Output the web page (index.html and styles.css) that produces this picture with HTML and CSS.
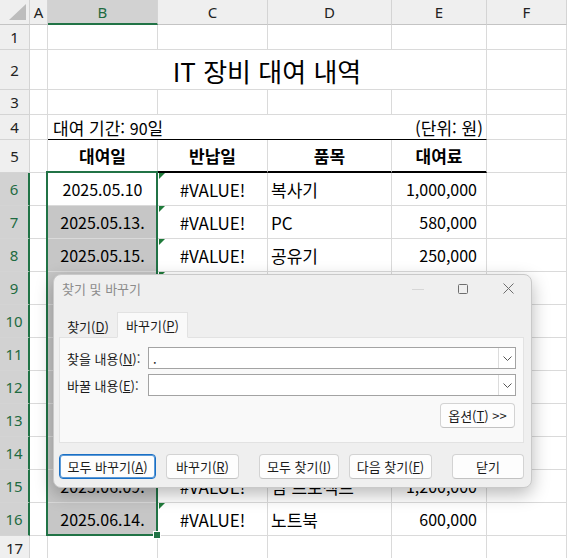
FILE: index.html
```html
<!DOCTYPE html>
<html lang="ko">
<head>
    <meta charset="UTF-8">
    <title>IT 장비 대여 내역</title>
    <link rel="stylesheet" href="styles.css">
</head>
<body>
    <div class="sheet">
        <div class="corner"><svg width="17" height="16" viewBox="0 0 17 16"><polygon points="17,0 17,16 0,16" fill="#bdbdbd"/></svg></div>
        <div class="ch">A</div><div class="ch on">B</div><div class="ch">C</div><div class="ch">D</div><div class="ch">E</div><div class="ch">F</div>

        <div class="rh">1</div><div class="c"></div><div class="c"></div><div class="c"></div><div class="c"></div><div class="c"></div><div class="c"></div>

        <div class="rh">2</div><div class="c"></div><div class="c title">IT 장비 대여 내역</div><div class="c"></div>

        <div class="rh">3</div><div class="c"></div><div class="c"></div><div class="c"></div><div class="c"></div><div class="c"></div><div class="c"></div>

        <div class="rh">4</div><div class="c"></div><div class="c info"><span>대여 기간: <b class="dg">90</b>일</span><span>(단위: 원)</span></div><div class="c"></div>

        <div class="rh">5</div><div class="c"></div><div class="c th">대여일</div><div class="c th">반납일</div><div class="c th">품목</div><div class="c th">대여료</div><div class="c"></div>

        <div class="rh on">6</div><div class="c"></div>
        <div class="c mid dg active">2025.05.10<div class="selbox"><i class="handle"></i></div></div>
        <div class="c mid err">#VALUE!</div><div class="c item">복사기</div><div class="c num dg">1,000,000</div><div class="c"></div>

        <div class="rh on">7</div><div class="c"></div><div class="c mid dg hl">2025.05.13.</div><div class="c mid err">#VALUE!</div><div class="c item">PC</div><div class="c num dg">580,000</div><div class="c"></div>

        <div class="rh on">8</div><div class="c"></div><div class="c mid dg hl">2025.05.15.</div><div class="c mid err">#VALUE!</div><div class="c item">공유기</div><div class="c num dg">250,000</div><div class="c"></div>

        <!-- rows 9-14 sit under the dialog -->
        <div class="rh on">9</div><div class="c"></div><div class="c hl"></div><div class="c err"></div><div class="c"></div><div class="c"></div><div class="c"></div>
        <div class="rh on">10</div><div class="c"></div><div class="c hl"></div><div class="c err"></div><div class="c"></div><div class="c"></div><div class="c"></div>
        <div class="rh on">11</div><div class="c"></div><div class="c hl"></div><div class="c err"></div><div class="c"></div><div class="c"></div><div class="c"></div>
        <div class="rh on">12</div><div class="c"></div><div class="c hl"></div><div class="c err"></div><div class="c"></div><div class="c"></div><div class="c"></div>
        <div class="rh on">13</div><div class="c"></div><div class="c hl"></div><div class="c err"></div><div class="c"></div><div class="c"></div><div class="c"></div>
        <div class="rh on">14</div><div class="c"></div><div class="c hl"></div><div class="c err"></div><div class="c"></div><div class="c"></div><div class="c"></div>

        <div class="rh on">15</div><div class="c"></div><div class="c mid dg hl">2025.06.09.</div><div class="c mid err">#VALUE!</div><div class="c item">빔 프로젝트</div><div class="c num dg">1,200,000</div><div class="c"></div>

        <div class="rh on">16</div><div class="c"></div><div class="c mid dg hl">2025.06.14.</div><div class="c mid err">#VALUE!</div><div class="c item">노트북</div><div class="c num dg">600,000</div><div class="c"></div>

        <div class="rh">17</div><div class="c"></div><div class="c"></div><div class="c"></div><div class="c"></div><div class="c"></div><div class="c"></div>
    </div>

    <div class="dialog">
        <div class="dlg-bar">
            <span class="dlg-title">찾기 및 바꾸기</span>
            <div class="win-ctl">
                <svg width="12" height="10" viewBox="0 0 12 10"><line x1="0" y1="5.5" x2="12" y2="5.5" stroke="#d6d6d6"/></svg>
                <svg class="max" width="10" height="10" viewBox="0 0 10 10"><rect x="0.5" y="0.5" width="9" height="9" rx="1" fill="none" stroke="#6e6e6e"/></svg>
                <svg class="close" width="11" height="11" viewBox="0 0 11 11"><path d="M0.5 0.5L10.5 10.5M10.5 0.5L0.5 10.5" stroke="#6e6e6e"/></svg>
            </div>
        </div>

        <div class="tabs">
            <div class="tab">찾기(<u>D</u>)</div>
            <div class="tab on">바꾸기(<u>P</u>)</div>
        </div>

        <div class="panel">
            <div class="field">
                <label>찾을 내용(<u>N</u>):</label>
                <div class="combo"><span class="val">.</span><span class="drop"><svg width="9" height="5" viewBox="0 0 9 5"><path d="M0.5 0.5L4.5 4.5L8.5 0.5" fill="none" stroke="#555"/></svg></span></div>
            </div>
            <div class="field">
                <label>바꿀 내용(<u>E</u>):</label>
                <div class="combo"><span class="val"></span><span class="drop"><svg width="9" height="5" viewBox="0 0 9 5"><path d="M0.5 0.5L4.5 4.5L8.5 0.5" fill="none" stroke="#555"/></svg></span></div>
            </div>
            <div class="opt-row">
                <button class="btn opt">옵션(<u>T</u>) &gt;&gt;</button>
            </div>
        </div>

        <div class="actions">
            <button class="btn b-allrep focus">모두 바꾸기(<u>A</u>)</button>
            <button class="btn b-rep">바꾸기(<u>R</u>)</button>
            <button class="btn b-allfind">모두 찾기(<u>I</u>)</button>
            <button class="btn b-next">다음 찾기(<u>F</u>)</button>
            <button class="btn b-close">닫기</button>
        </div>
    </div>
</body>
</html>
```

FILE: styles.css
```css
body {
    margin: 0;
    width: 567px;
    height: 558px;
    overflow: hidden;
    position: relative;
    background: #fff;
    font-family: "Noto Sans CJK KR", "Noto Sans", sans-serif;
    color: #000;
}

/* ---- sheet ---- */
.sheet {
    display: grid;
    grid-template-columns: 30px 18px 110px 110px 124px 95px 80px;
    grid-template-rows: 25px 25px 40px 25px 25px 33px repeat(11, 33px) 25px;
}
.sheet > div {
    box-sizing: border-box;
    display: flex;
    align-items: center;
    white-space: nowrap;
}
.corner {
    background: #efefef;
    border-right: 1px solid #d4d4d4;
    border-bottom: 1px solid #c4c4c4;
    justify-content: flex-end;
    align-items: flex-end !important;
    padding: 0 3px 4px 0;
}
.ch {
    background: #efefef;
    border-right: 1px solid #d4d4d4;
    border-bottom: 1px solid #c4c4c4;
    justify-content: center;
    font-family: "Noto Sans", sans-serif;
    font-size: 15px;
    color: #222;
}
.ch.on {
    background: #d2d2d2;
    color: #1e6b41;
    border-bottom: 2px solid #217346;
}
.rh {
    background: #efefef;
    border-right: 1px solid #d4d4d4;
    border-bottom: 1px solid #d4d4d4;
    justify-content: center;
    font-family: "Noto Sans", sans-serif;
    font-size: 15px;
    color: #222;
}
.rh.on {
    background: #d2d2d2;
    color: #1e6b41;
    border-right: 2px solid #217346;
}
.c {
    border-right: 1px solid #dadada;
    border-bottom: 1px solid #dadada;
    font-size: 17px;
    position: relative;
}
.dg {
    font-size: 16px;
    font-weight: normal;
}
.title {
    grid-column: span 4;
    justify-content: center;
    font-size: 26px;
    padding-top: 2px;
}
.info {
    grid-column: span 4;
    justify-content: space-between;
    padding: 0 3px 0 5px;
    border-bottom: 1px solid #000 !important;
}
.th {
    justify-content: center;
    font-weight: bold;
    border-bottom: 2px solid #000 !important;
}
.mid {
    justify-content: center;
}
.item {
    padding-left: 3px;
}
.num {
    justify-content: flex-end;
    padding-right: 9px;
}
.hl {
    background: #c6c6c6;
}
.err::before {
    content: "";
    position: absolute;
    left: 1px;
    top: 0;
    border-top: 6px solid #1f7a3a;
    border-right: 6px solid transparent;
}
.selbox {
    position: absolute;
    left: -2px;
    top: -2px;
    width: 112px;
    height: 365px;
    box-sizing: border-box;
    border: 2px solid #217346;
    z-index: 2;
}
.handle {
    position: absolute;
    right: -5px;
    bottom: -5px;
    width: 6px;
    height: 6px;
    background: #217346;
    border: 1px solid #fff;
}

/* ---- find & replace dialog ---- */
.dialog {
    position: absolute;
    left: 53px;
    top: 274px;
    width: 479px;
    height: 214px;
    box-sizing: border-box;
    background: #efefef;
    border: 1px solid #c9c9c9;
    border-radius: 8px;
    box-shadow: 0 6px 18px rgba(0,0,0,0.28);
    font-size: 13px;
    color: #1b1b1b;
    z-index: 5;
}
.dlg-bar {
    height: 27px;
    display: flex;
    align-items: center;
    padding-left: 8px;
}
.dlg-title {
    color: #8c8c8c;
}
.win-ctl {
    margin-left: auto;
    margin-right: 17px;
    display: flex;
    align-items: center;
}
.win-ctl .max {
    margin-left: 34px;
}
.win-ctl .close {
    margin-left: 35px;
}
.tabs {
    display: flex;
    margin: 10px 0 0 5px;
    height: 25px;
}
.tab {
    width: 58px;
    display: flex;
    align-items: center;
    justify-content: center;
    padding-top: 3px;
    box-sizing: border-box;
}
.tab.on {
    width: 71px;
    height: 26px;
    padding-top: 0;
    background: #f9f9f9;
    border: 1px solid #e2e2e2;
    border-bottom: 1px solid #f9f9f9;
    position: relative;
    z-index: 1;
}
.panel {
    margin-left: 5px;
    width: 465px;
    height: 106px;
    box-sizing: border-box;
    background: #f9f9f9;
    border: 1px solid #e2e2e2;
    padding: 9px 0 0 7px;
}
.field {
    display: flex;
    align-items: center;
    height: 22px;
    margin-bottom: 5px;
}
.field label {
    width: 81px;
}
.combo {
    width: 368px;
    height: 22px;
    box-sizing: border-box;
    background: #fff;
    border: 1px solid #a3a3a3;
    display: flex;
    align-items: center;
}
.combo .val {
    flex: 1;
    padding-left: 4px;
}
.combo .drop {
    width: 17px;
    height: 20px;
    box-sizing: border-box;
    border-left: 1px solid #dcdcdc;
    display: flex;
    align-items: center;
    justify-content: center;
}
.opt-row {
    display: flex;
    justify-content: flex-end;
    margin: 7px 8px 0 0;
}
.btn {
    font-family: inherit;
    font-size: 13px;
    color: #1b1b1b;
    height: 25px;
    padding: 0;
    background: #fdfdfd;
    border: 1px solid #d3d3d3;
    border-bottom-color: #c2c2c2;
    border-radius: 4px;
    white-space: nowrap;
}
.opt {
    width: 75px;
}
.actions {
    display: flex;
    margin: 11px 0 0 5px;
}
.b-allrep { width: 97px; }
.b-rep { width: 73px; margin-left: 10px; }
.b-allfind { width: 80px; margin-left: 20px; }
.b-next { width: 83px; margin-left: 10px; }
.b-close { width: 72px; margin-left: 20px; }
.btn.focus {
    border: 1px solid #1a6fc4;
    box-shadow: inset 0 0 0 1px #5b9ad8;
}
```
